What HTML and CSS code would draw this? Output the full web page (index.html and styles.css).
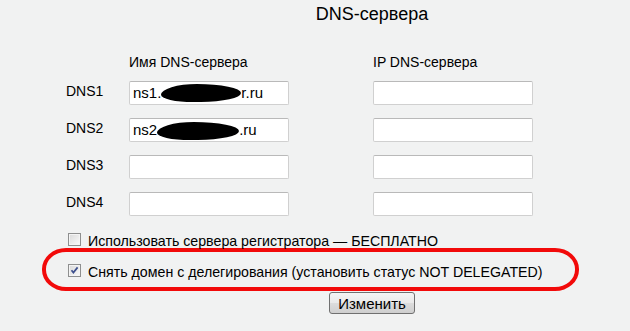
FILE: index.html
```html
<!doctype html><html lang="ru">
<head><meta charset="utf-8"/><title>DNS-сервера</title>
<meta name="viewport" content="width=device-width, initial-scale=1">
<link rel="stylesheet" href="styles.css">
</head>
<body>

<h1 class="title">DNS-сервера</h1>

<div class="fields">
	<span></span>
	<span class="head">Имя DNS-сервера</span>
	<span class="head">IP DNS-сервера</span>

	<label class="lbl" for="ns1">DNS1</label>
	<div class="inp" id="ns1">ns1.<span class="blot b1"></span>r.ru</div>
	<div class="inp"></div>

	<label class="lbl" for="ns2">DNS2</label>
	<div class="inp" id="ns2">ns2<span class="blot b2"></span>.ru</div>
	<div class="inp"></div>

	<label class="lbl">DNS3</label>
	<div class="inp"></div>
	<div class="inp"></div>

	<label class="lbl">DNS4</label>
	<div class="inp"></div>
	<div class="inp"></div>
</div>

<label class="opt">
	<span class="box"></span>
	<span>Использовать сервера регистратора — БЕСПЛАТНО</span>
</label>

<div class="mark">
	<label class="opt">
		<span class="box"><svg width="11" height="11" viewBox="0 0 11 11"><path d="M2.5 5.2 L4.4 7.6 L8.6 2.4" fill="none" stroke="#3d4f8c" stroke-width="1.7"/></svg></span>
		<span>Снять домен с делегирования (установить статус NOT DELEGATED)</span>
	</label>
</div>

<div class="actions"><button type="button" class="btn">Изменить</button></div>

</body></html>
```

FILE: styles.css
```css
html, body {margin: 0; padding: 0;}
body {
	background: #f1f2f2;
	color: #000;
	font-family: "Liberation Sans", Arial, sans-serif;
	font-size: 14px;
	width: 630px;
	height: 331px;
	overflow: hidden;
}

.title {
	margin: 0;
	padding: 4px 0 0 114px;
	font-size: 18px;
	font-weight: normal;
	line-height: 21px;
	text-align: center;
}

.fields {
	display: grid;
	grid-template-columns: 63px 244px 160px;
	grid-auto-rows: 24px;
	grid-template-rows: 14px;
	row-gap: 13px;
	margin: 29px 0 0 66px;
}
.head {line-height: 16px;}
.lbl {line-height: 16px; padding-top: 2px;}

.inp {
	box-sizing: border-box;
	width: 160px;
	height: 24px;
	background: #fff;
	border: 1px solid #d0d0d0;
	border-top-color: #b9b9b9;
	border-radius: 2px;
	padding: 0 3px;
	font-size: 15px;
	line-height: 22px;
	white-space: nowrap;
	overflow: hidden;
}
.blot {
	display: inline-block;
	vertical-align: middle;
	background: #000;
	height: 18px;
	border-radius: 45% 55% 50% 40% / 60% 50% 50% 40%;
}
.b1 {width: 80px; margin-top: -2px;}
.b2 {width: 82px;}

.opt {
	display: flex;
	align-items: flex-start;
	gap: 7px;
	font-size: 14.2px;
	line-height: 18px;
	white-space: nowrap;
}
.fields + .opt {margin: 16px 0 0 68px;}

.box {
	box-sizing: border-box;
	flex: none;
	width: 13px;
	height: 13px;
	margin-top: 1px;
	border: 1px solid #8e8f8f;
	background: linear-gradient(135deg, #d9d9d9, #fafafa);
	box-shadow: inset 0 0 0 1px #f4f4f4;
}
.box svg {display: block; margin: 0;}

.mark {
	box-sizing: border-box;
	width: 537px;
	height: 43px;
	margin: -2px 0 0 42px;
	border: 4px solid #f20a0a;
	border-radius: 24px / 21px;
	padding: 11px 0 0 22px;
}

.actions {
	padding: 1px 0 0 114px;
	text-align: center;
}
.btn {
	box-sizing: border-box;
	width: 86px;
	height: 22px;
	padding: 0;
	font-family: inherit;
	font-size: 15px;
	color: #000;
	border: 1px solid #707070;
	border-radius: 3px;
	background: linear-gradient(#f4f4f4, #e9e9e9 50%, #dcdcdc 51%, #cfcfcf);
}
```
